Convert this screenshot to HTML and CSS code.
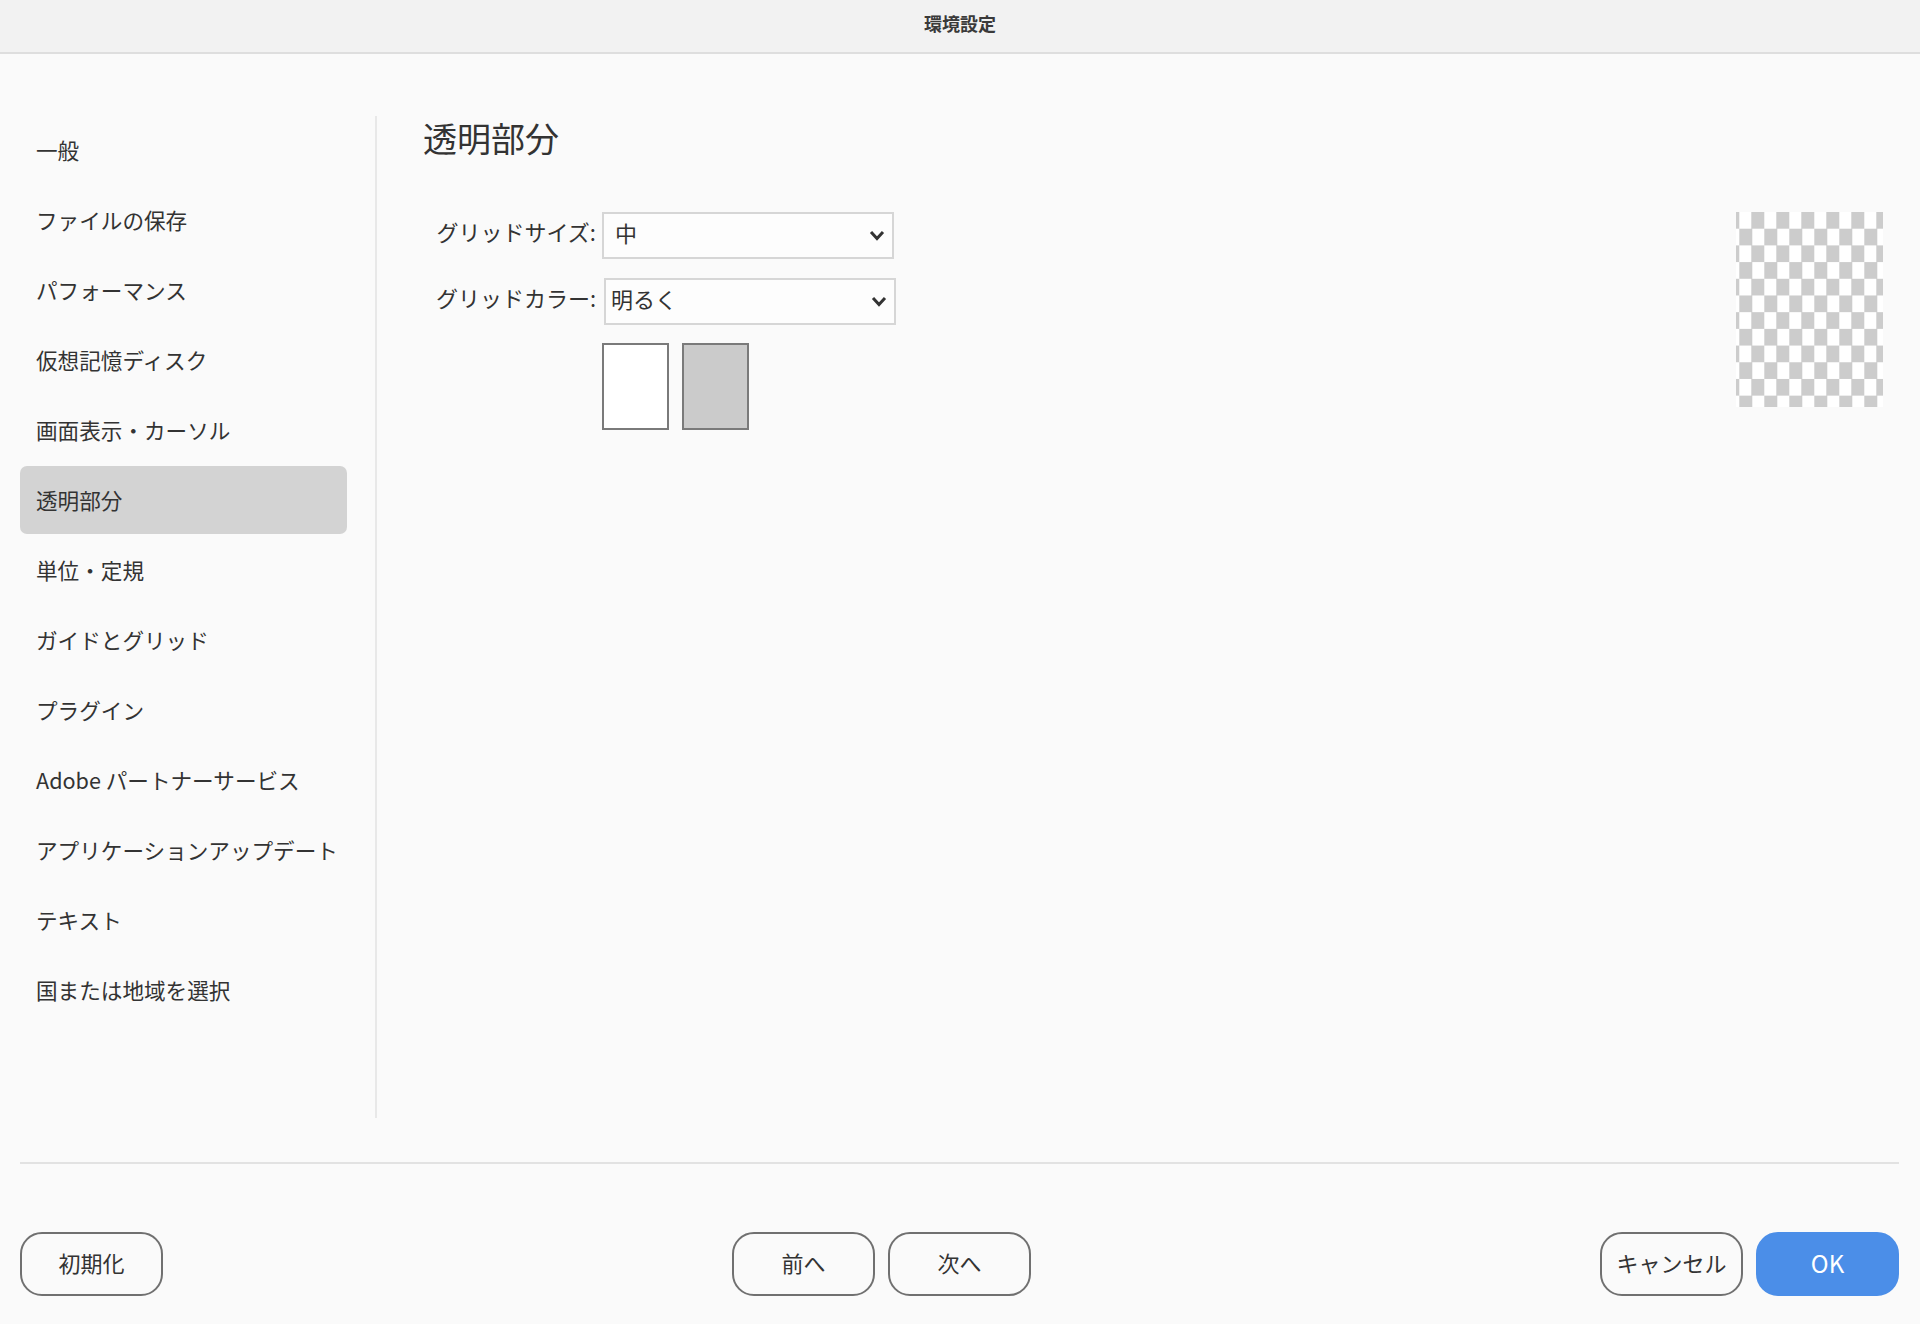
FILE: index.html
```html
<!DOCTYPE html>
<html lang="ja">
<head>
    <meta charset="UTF-8">
    <title>環境設定</title>
    <link rel="stylesheet" href="styles.css">
</head>
<body>
<div class="titlebar">環境設定</div>

<div class="main">
    <ul class="sidebar">
        <li>一般</li>
        <li>ファイルの保存</li>
        <li>パフォーマンス</li>
        <li>仮想記憶ディスク</li>
        <li>画面表示・カーソル</li>
        <li class="active">透明部分</li>
        <li>単位・定規</li>
        <li>ガイドとグリッド</li>
        <li>プラグイン</li>
        <li>Adobe パートナーサービス</li>
        <li>アプリケーションアップデート</li>
        <li>テキスト</li>
        <li>国または地域を選択</li>
    </ul>

    <div class="content">
        <h1 class="heading">透明部分</h1>
        <div class="panel">
            <div class="form">
                <div class="row">
                    <label class="label">グリッドサイズ:</label>
                    <div class="select">
                        <span>中</span>
                        <svg class="chev" width="16" height="11" viewBox="0 0 16 11"><path d="M2 2 L8 8.5 L14 2" fill="none" stroke="#333" stroke-width="3"/></svg>
                    </div>
                </div>
                <div class="row second">
                    <label class="label">グリッドカラー:</label>
                    <div class="select">
                        <span>明るく</span>
                        <svg class="chev" width="16" height="11" viewBox="0 0 16 11"><path d="M2 2 L8 8.5 L14 2" fill="none" stroke="#333" stroke-width="3"/></svg>
                    </div>
                </div>
                <div class="swatches">
                    <div class="swatch"></div>
                    <div class="swatch grey"></div>
                </div>
            </div>
            <div class="preview"></div>
        </div>
    </div>
</div>

<div class="rule"></div>

<div class="footer">
    <button class="btn">初期化</button>
    <div class="group">
        <button class="btn">前へ</button>
        <button class="btn">次へ</button>
    </div>
    <div class="group">
        <button class="btn">キャンセル</button>
        <button class="btn ok">OK</button>
    </div>
</div>
</body>
</html>
```

FILE: styles.css
```css
*{
    margin:0;
    padding:0;
    box-sizing:border-box;
}
ul{
    list-style:none;
}
body{
    width:1920px;
    height:1324px;
    overflow:hidden;
    background:#fafafa;
    color:#333;
    font-family:"Noto Sans CJK JP", "Noto Sans", sans-serif;
}
.titlebar{
    height:54px;
    line-height:46px;
    background:#f2f2f2;
    border-bottom:2px solid #dedede;
    text-align:center;
    font-size:18px;
    font-weight:bold;
    color:#3a3a3a;
}
.main{
    display:flex;
    height:1108px;
    padding-top:62px;
}
.sidebar{
    width:377px;
    height:1002px;
    padding-left:20px;
    border-right:2px solid #e8e8e8;
}
.sidebar li{
    width:327px;
    height:68px;
    margin-bottom:2px;
    padding-left:16px;
    line-height:67px;
    font-size:21.6px;
    border-radius:7px;
    white-space:nowrap;
}
.sidebar .active{
    background:#d3d3d3;
}
.content{
    flex:1;
    padding-left:46px;
    padding-right:37px;
}
.heading{
    font-size:34px;
    font-weight:normal;
    line-height:44px;
}
.panel{
    display:flex;
    justify-content:space-between;
    margin-top:52px;
}
.row{
    display:flex;
    align-items:center;
}
.row.second{
    margin-top:19px;
}
.label{
    width:173px;
    padding-bottom:9px;
    text-align:right;
    font-size:22px;
    white-space:nowrap;
}
.select{
    display:flex;
    align-items:center;
    justify-content:space-between;
    width:292px;
    height:47px;
    margin-left:6px;
    padding:0 7px 0 11px;
    background:#fdfdfd;
    border:2px solid #d6d6d6;
    font-size:22px;
}
.select span{
    padding-bottom:8px;
}
.row.second .select{
    margin-left:8px;
    padding-left:5px;
}
.swatches{
    display:flex;
    gap:13px;
    margin:18px 0 0 179px;
}
.swatch{
    width:67px;
    height:87px;
    background:#fff;
    border:2px solid #7a7a7a;
}
.swatch.grey{
    background:#cbcbcb;
}
.preview{
    width:147px;
    height:195px;
    background:repeating-conic-gradient(#cccccc 0 25%, #ffffff 0 50%);
    background-size:25px 33.4px;
    background-position:3.3px 0;
}
.rule{
    margin:0 21px 0 20px;
    border-top:2px solid #e2e2e2;
}
.footer{
    display:flex;
    justify-content:space-between;
    padding:68px 21px 0 20px;
}
.group{
    display:flex;
    gap:13px;
}
.btn{
    width:143px;
    height:64px;
    padding-bottom:4px;
    border:2px solid #707070;
    border-radius:22px;
    background:#fafafa;
    color:#333;
    font-family:"Noto Sans CJK JP", "Noto Sans", sans-serif;
    font-size:22px;
}
.btn.ok{
    background:#4b8ee8;
    border-color:#4b8ee8;
    color:#fff;
    font-size:24px;
}
```
